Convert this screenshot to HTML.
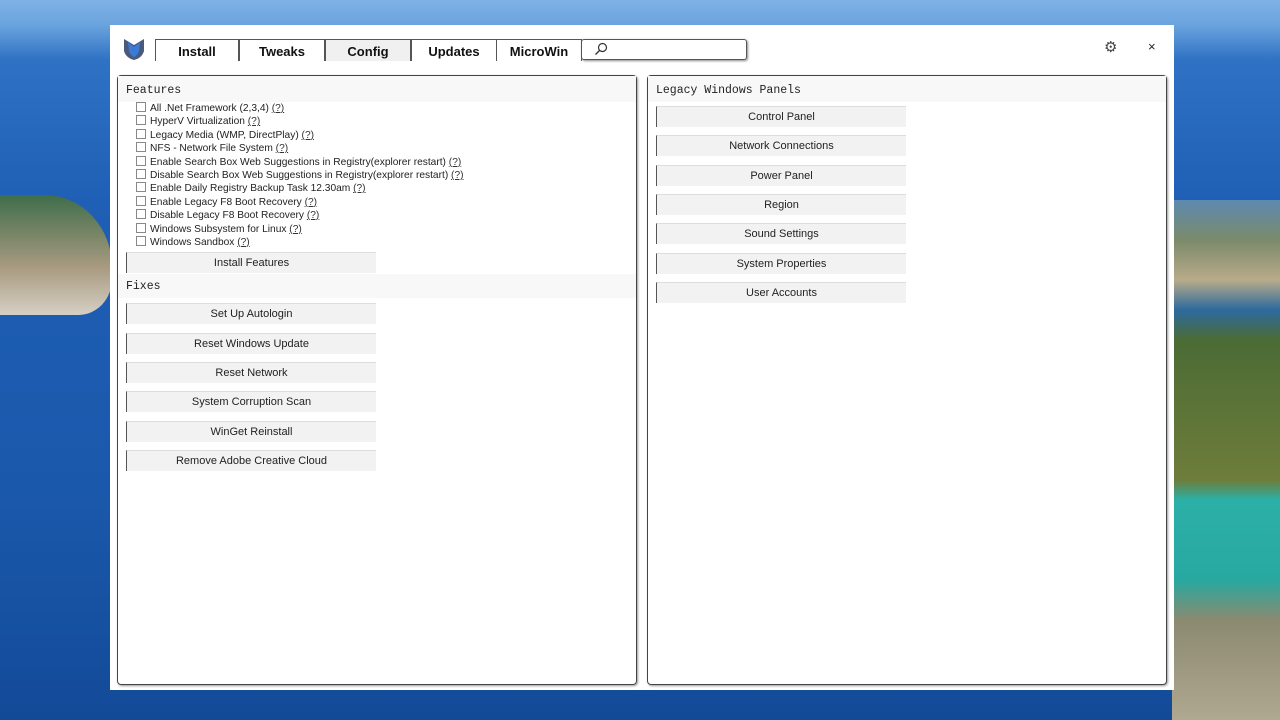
<!DOCTYPE html>
<html><head><style>
body{margin:0;width:1280px;height:720px;overflow:hidden;position:relative;font-family:"Liberation Sans",sans-serif;
background:linear-gradient(180deg,#7fb2e6 0px,#6aa3de 25px,#2f72c4 60px,#1f5fb5 200px,#1a58ab 500px,#134a98 720px);}
.landL{position:absolute;left:0;top:195px;width:112px;height:120px;background:linear-gradient(180deg,#3f6d4a,#a89a80 60%,#d6cfc4);border-radius:0 60% 30% 0}
.landR{position:absolute;left:1172px;top:200px;width:108px;height:520px;background:linear-gradient(180deg,#5d8ab0 0px,#7b8a6a 40px,#b8ab8a 80px,#2d6a9e 110px,#4b6b35 140px,#6e7d3a 280px,#2bb0a8 300px,#28a8a0 380px,#8b8a70 420px,#b0a890 520px)}
.win{position:absolute;left:110px;top:25px;width:1064px;height:665px;background:#fff}
.tab{position:absolute;top:14px;height:21px;border:1px solid #555;border-bottom:none;background:#fff;font-weight:bold;font-size:13px;text-align:center;line-height:23px;color:#111}
.search{position:absolute;left:471px;top:14px;width:164px;height:19px;border:1px solid #555;border-radius:3px;box-shadow:1px 1px 2px #888}
.panel{position:absolute;top:50px;height:608px;border:1px solid #444;border-radius:4px;box-shadow:1px 1px 2px #999}
.hd{font-family:"Liberation Mono",monospace;font-size:11.5px;color:#222;background:#f8f8f8;height:26px;line-height:30px;padding-left:8px}
.cb{font-size:10.2px;color:#222;height:13.4px;line-height:13px;padding-left:18px;white-space:nowrap}
.cb i{display:inline-block;width:8px;height:8px;border:1px solid #888;margin-right:4px;vertical-align:-1px}
.cb u{color:#333}
.btn{width:249px;height:20px;background:#f2f2f2;border-left:1px solid #555;border-top:1px solid #ddd;font-size:11px;text-align:center;line-height:20px;color:#222;margin-left:8px}
.m{margin-top:8.35px}
</style></head><body>
<div class="landL"></div><div class="landR"></div>
<div class="win">
<svg style="position:absolute;left:12px;top:12px" width="24" height="24" viewBox="0 0 24 24"><path d="M2 2 L12 8 L22 2 L22 14 Q20 21 12 23 Q4 21 2 14Z" fill="#4a5a7a"/><path d="M6 5 L12 10 L18 5 L17 14 Q15 19 12 20 Q9 19 7 14Z" fill="#3a7ad8"/></svg>
<div class="tab" style="left:45px;width:82px">Install</div>
<div class="tab" style="left:129px;width:84px">Tweaks</div>
<div class="tab" style="left:215px;width:84px;background:#f0f0f0">Config</div>
<div class="tab" style="left:301px;width:84px">Updates</div>
<div class="tab" style="left:386px;width:84px">MicroWin</div>
<div class="search"><svg style="position:absolute;left:12px;top:2px" width="14" height="14" viewBox="0 0 14 14"><circle cx="8.5" cy="5.5" r="4" fill="none" stroke="#333" stroke-width="1.2"/><path d="M5.5 8.5 L1.5 12.5" stroke="#333" stroke-width="1.3"/></svg></div>
<div style="position:absolute;left:994px;top:13px;font-size:15px;color:#444">⚙</div>
<div style="position:absolute;left:1038px;top:14px;font-size:13px;color:#222">×</div>
<div class="panel" style="left:7px;width:518px">
<div class="hd">Features</div>
<div class="cb"><i></i>All .Net Framework (2,3,4) <u>(?)</u></div>
<div class="cb"><i></i>HyperV Virtualization <u>(?)</u></div>
<div class="cb"><i></i>Legacy Media (WMP, DirectPlay) <u>(?)</u></div>
<div class="cb"><i></i>NFS - Network File System <u>(?)</u></div>
<div class="cb"><i></i>Enable Search Box Web Suggestions in Registry(explorer restart) <u>(?)</u></div>
<div class="cb"><i></i>Disable Search Box Web Suggestions in Registry(explorer restart) <u>(?)</u></div>
<div class="cb"><i></i>Enable Daily Registry Backup Task 12.30am <u>(?)</u></div>
<div class="cb"><i></i>Enable Legacy F8 Boot Recovery <u>(?)</u></div>
<div class="cb"><i></i>Disable Legacy F8 Boot Recovery <u>(?)</u></div>
<div class="cb"><i></i>Windows Subsystem for Linux <u>(?)</u></div>
<div class="cb"><i></i>Windows Sandbox <u>(?)</u></div>
<div class="btn" style="margin-top:3px">Install Features</div>
<div class="hd" style="margin-top:1px;height:24px;line-height:26px">Fixes</div>
<div class="btn" style="margin-top:5px">Set Up Autologin</div>
<div class="btn m">Reset Windows Update</div>
<div class="btn m">Reset Network</div>
<div class="btn m">System Corruption Scan</div>
<div class="btn m">WinGet Reinstall</div>
<div class="btn m">Remove Adobe Creative Cloud</div>
</div>
<div class="panel" style="left:537px;width:518px">
<div class="hd">Legacy Windows Panels</div>
<div class="btn" style="margin-top:4px">Control Panel</div>
<div class="btn m">Network Connections</div>
<div class="btn m">Power Panel</div>
<div class="btn m">Region</div>
<div class="btn m">Sound Settings</div>
<div class="btn m">System Properties</div>
<div class="btn m">User Accounts</div>
</div>
</div>
</body></html>
